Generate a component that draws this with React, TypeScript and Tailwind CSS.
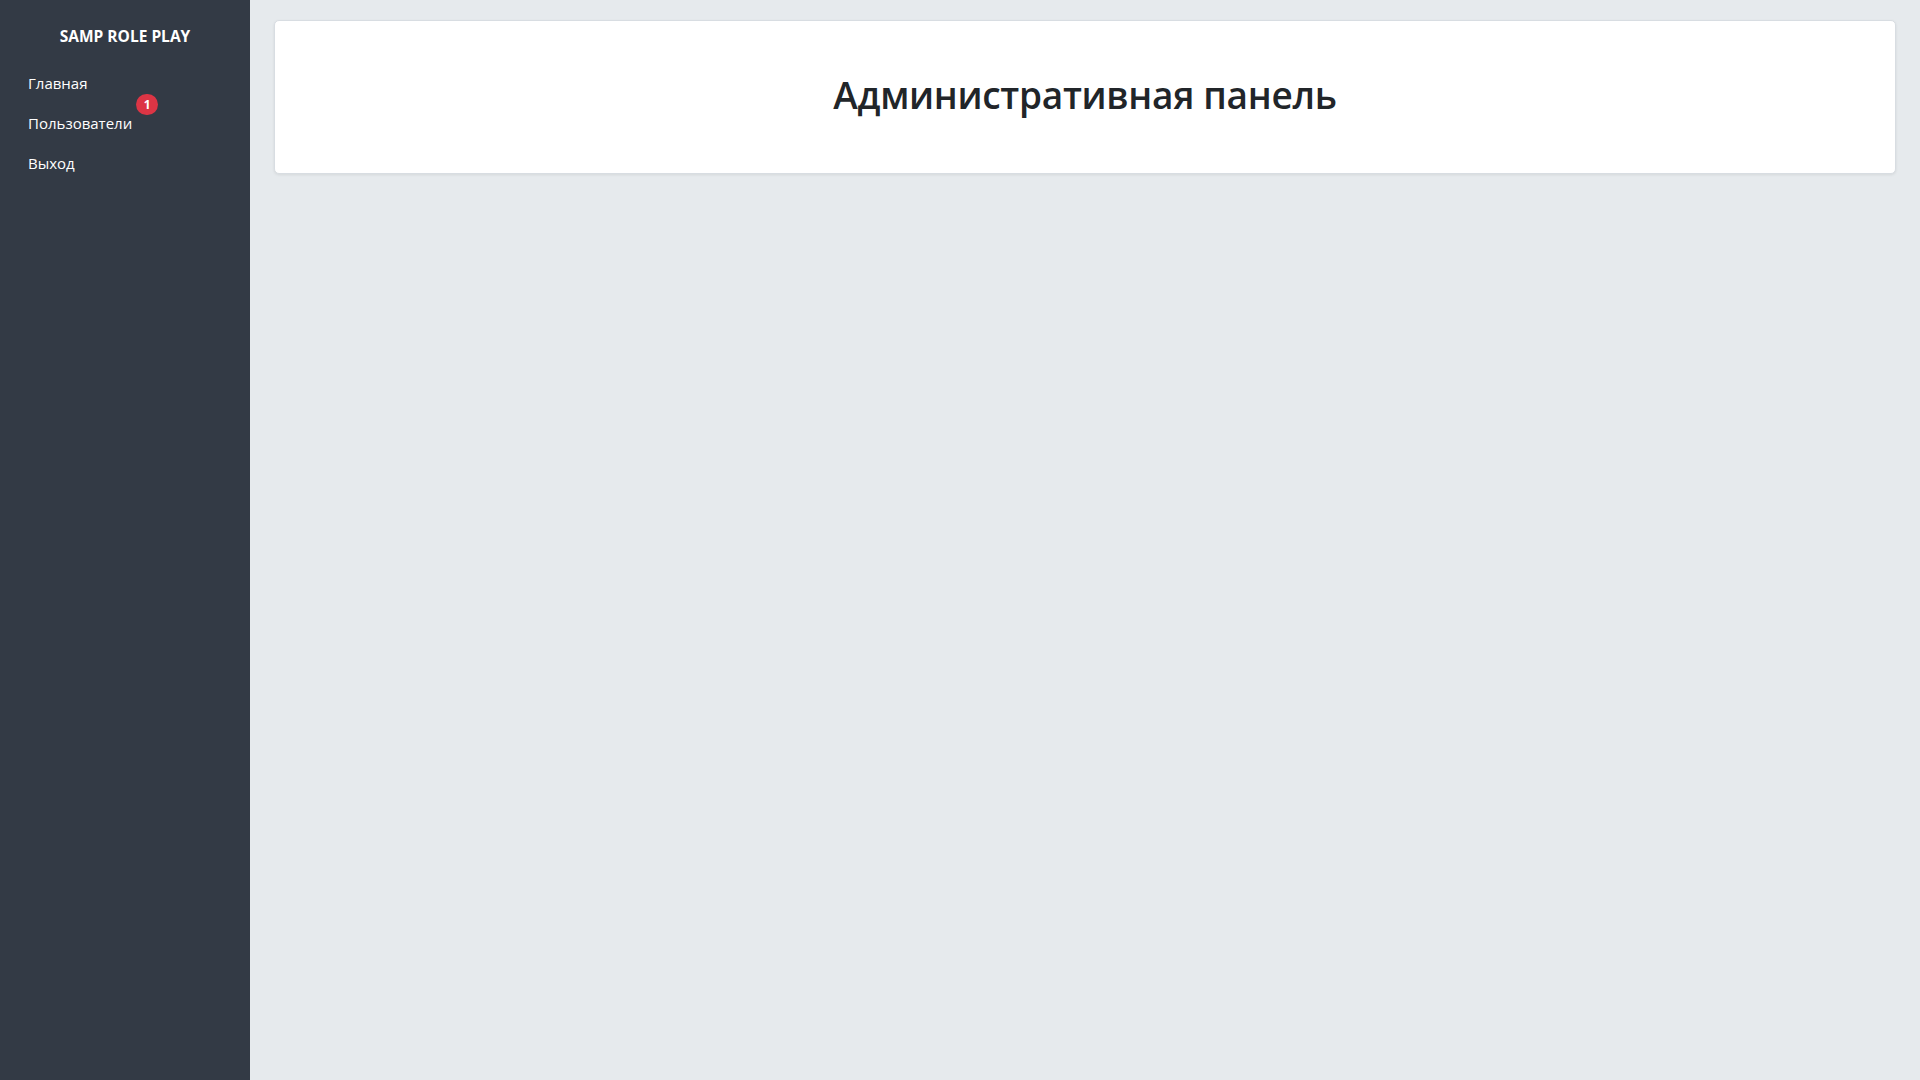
import React from 'react';

const navItems = [
  { label: 'Главная', badge: 0 },
  { label: 'Пользователи', badge: 1 },
  { label: 'Выход', badge: 0 },
];

const Sidebar: React.FC = () => (
  <aside className="w-[250px] shrink-0 bg-[#333a45] text-white min-h-screen pt-[25px]">
    <div className="text-center text-[15.5px] font-bold leading-[22px]">SAMP ROLE PLAY</div>
    <nav className="mt-[16px] flex flex-col">
      {navItems.map((item) => (
        <a key={item.label} href="#" className="relative self-start pl-[28px] pr-[16px] h-[40px] flex items-center text-[15px] text-white">
          {item.label}
          {item.badge > 0 && (
            <span className="absolute right-[-10px] top-[-9px] w-[22px] h-[21px] rounded-full bg-[#dc3545] text-white text-[12px] font-bold flex items-center justify-center">
              {item.badge}
            </span>
          )}
        </a>
      ))}
    </nav>
  </aside>
);

export default function App() {
  return (
    <div className="flex w-full min-h-screen bg-[#e6eaed]" style={{ fontFamily: '"Open Sans", "Noto Sans", sans-serif' }}>
      <Sidebar />
      <main className="flex-1 pt-[20px] pl-[24px] pr-[24px]">
        <div className="h-[154px] bg-white rounded-[5px] border border-[#d8dde2] shadow-[0_1px_3px_rgba(0,0,0,0.08)] flex items-center justify-center pb-[5px]">
          <h1 className="text-[37px] font-semibold text-[#212529] tracking-[-0.3px]">Административная панель</h1>
        </div>
      </main>
    </div>
  );
}
